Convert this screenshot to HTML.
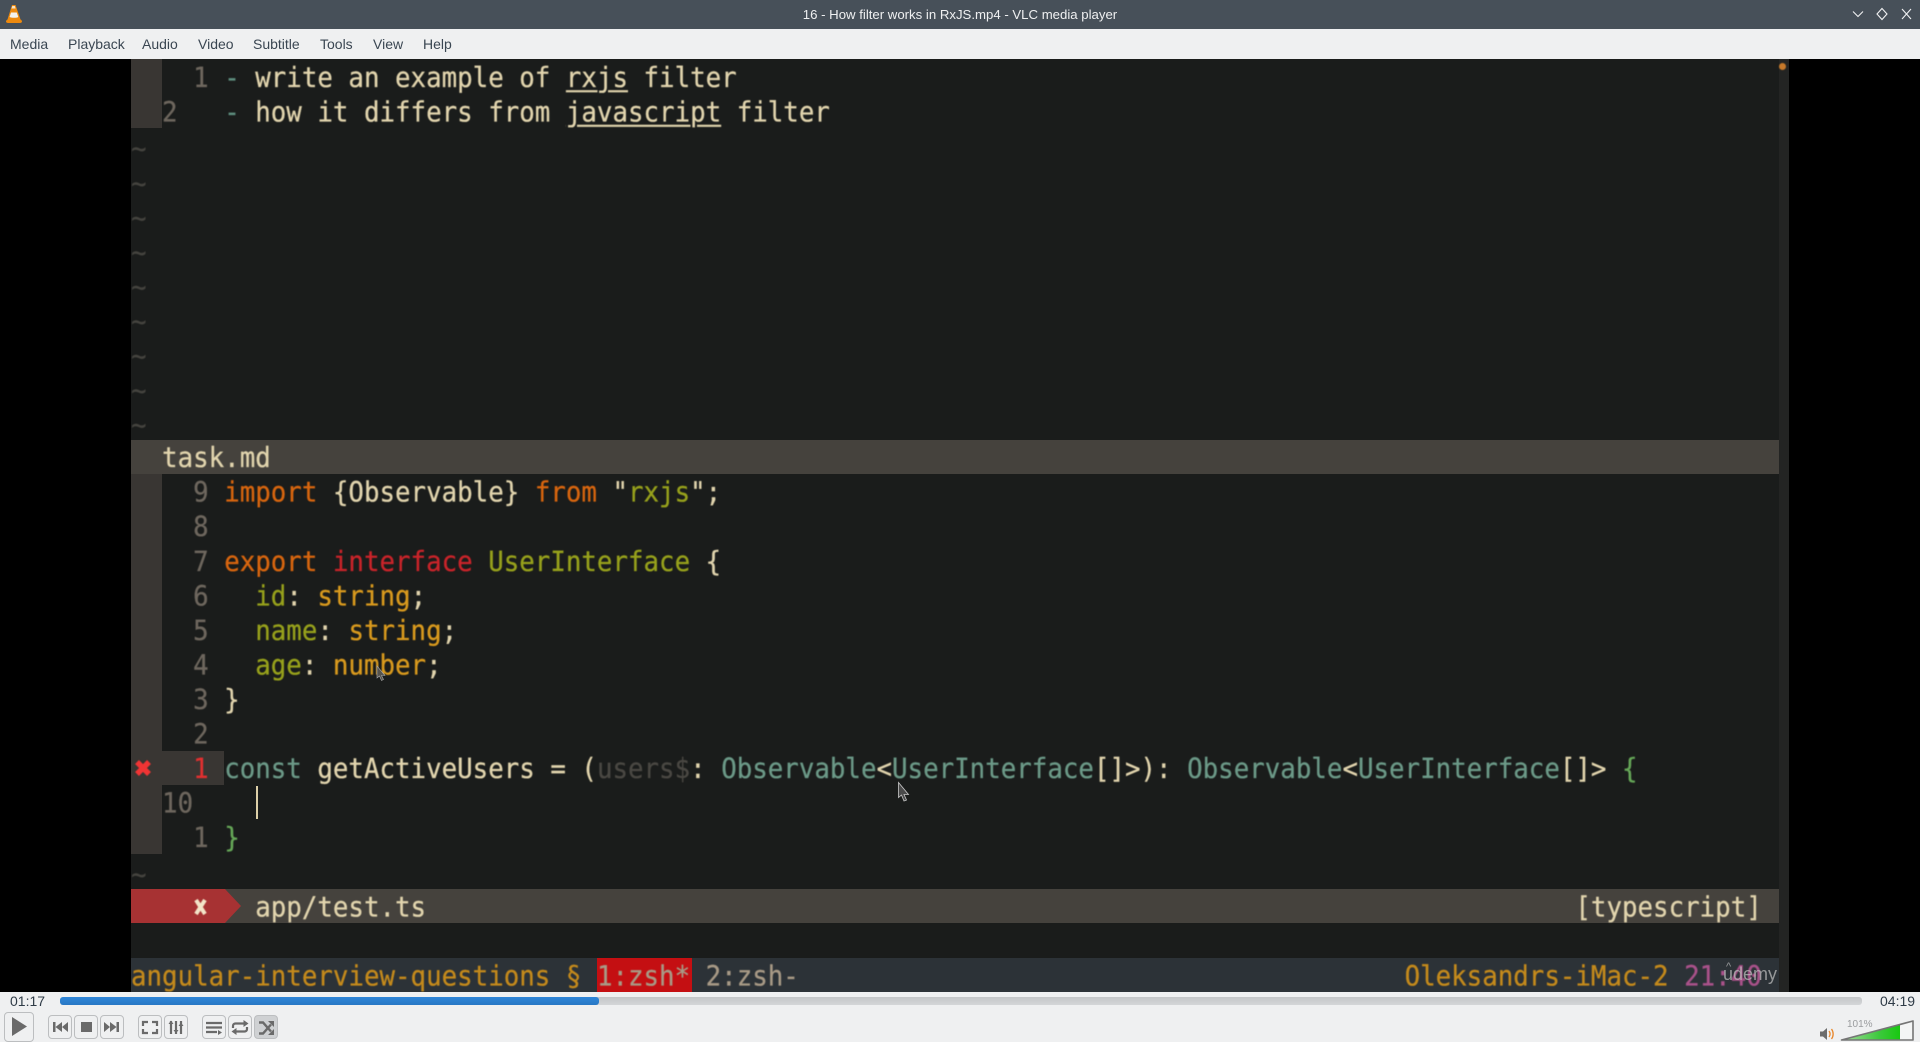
<!DOCTYPE html>
<html><head><meta charset="utf-8"><title>16 - How filter works in RxJS.mp4 - VLC media player</title>
<style>
html,body{margin:0;padding:0;width:1920px;height:1042px;overflow:hidden;background:#eff0f1}
body{position:relative;font-family:"Liberation Sans","Noto Sans CJK JP",sans-serif}
.a{position:absolute}
.tb{left:0;top:0;width:1920px;height:29px;background:#475059}
.title{left:560px;width:800px;top:5px;text-align:center;color:#eff0f1;font-size:13.2px;line-height:19px}
.menu{left:0;top:29px;width:1920px;height:30px;background:#eff0f1}
.m{top:35px;font-size:14px;line-height:19px;color:#3a4652}
.video{left:0;top:59px;width:1920px;height:933px;background:#000}
.term{left:131px;top:59px;width:1658px;height:933px;background:#1a1c1b}
.strip{left:1779px;top:59px;width:10px;height:933px;background:#232423}
.g{background:#393633}
pre{position:absolute;left:131px;top:60.7px;margin:0;font-family:"DejaVu Sans Mono","Liberation Mono",monospace;font-size:25.8px;line-height:32.02px;color:#e2d5ae;text-rendering:geometricPrecision;filter:blur(.45px);white-space:pre;transform:scaleY(1.08);transform-origin:0 0;-webkit-text-stroke:.25px currentColor}
.n{color:#6e675e}.t{color:#45443f;position:relative;top:2px}.d{color:#5f8f80}.o{color:#d8660f}.r{color:#c9242a}.gr{color:#97a11c}.y{color:#d99a1e}.c{color:#6c9a88}.dk{color:#4a4843}.ln{color:#66a758}.am{color:#c48a1c}.pk{color:#a9528a}.z{color:#a89a86}.rd{color:#e03030}.u{text-decoration:underline;text-decoration-thickness:2px;text-underline-offset:3px}
.time{font-size:14px;line-height:18px;color:#2f3b47}
.btn{box-sizing:border-box;border:1px solid #bcbec0;border-radius:4px;width:24px;height:24px;top:1015px;background:#eff0f1}
</style></head><body>
<div class="a tb"></div>
<svg class="a" style="left:5px;top:4px" width="18" height="20" viewBox="0 0 18 20"><path d="M7 1h3.500l5 14.500c.8.6 1.500 1 1.500 2 0 1-1 1.500-2 1.500H3c-1 0-2-.5-2-1.500 0-1 .7-1.400 1.500-2z" fill="#ee8a0e"/><path d="M6 8.500h5.800l1.500 4.500c-1.500 1-6.500 1-8.700 0z" fill="#f4f2ee"/><path d="M7.300 2h2.500l.8 2.500H6.500z" fill="#f6e4c8"/></svg>
<div class="a title">16 - How filter works in RxJS.mp4 - VLC media player</div>
<svg class="a" style="left:1850px;top:6px" width="66" height="16" fill="none" stroke="#f0f1f2" stroke-width="1.100"><path d="M3 5.500l5 5 5-5"/><path d="M32 2.500l5 5.500-5 5.500-5-5.500z"/><path d="M52 3l9 10M61 3l-9 10"/></svg>
<div class="a menu"></div>
<div class="a m" style="left:10px">Media</div>
<div class="a m" style="left:68px">Playback</div>
<div class="a m" style="left:142px">Audio</div>
<div class="a m" style="left:198px">Video</div>
<div class="a m" style="left:253px">Subtitle</div>
<div class="a m" style="left:320px">Tools</div>
<div class="a m" style="left:373px">View</div>
<div class="a m" style="left:423px">Help</div>

<div class="a video"></div>
<div class="a term"></div>
<div class="a strip"></div>
<div class="a" style="left:1778.500px;top:62.500px;width:7px;height:7px;border-radius:50%;background:#c6792a;filter:blur(.6px)"></div>
<div class="a g" style="left:131px;top:59px;width:31px;height:69px"></div>
<div class="a g" style="left:131px;top:474px;width:31px;height:380px"></div>
<div class="a g" style="left:131px;top:751px;width:93px;height:34px"></div>
<div class="a" style="left:131px;top:440px;width:1648px;height:34px;background:#45423d"></div>
<div class="a" style="left:131px;top:889px;width:1648px;height:34px;background:#45423d"></div>
<div class="a" style="left:131px;top:889px;width:94px;height:34px;background:#a73233"></div>
<div class="a" style="left:225px;top:889px;width:0;height:0;border-left:16px solid #a73233;border-top:17px solid transparent;border-bottom:17px solid transparent"></div>
<div class="a" style="left:131px;top:958px;width:1648px;height:34px;background:#2c3237"></div>
<div class="a" style="left:597px;top:958px;width:95px;height:34px;background:#c40f12"></div>

<pre><span class="n">    1</span> <span class="d">-</span> write an example of <span class="u">rxjs</span> filter
<span class="n">  2</span>   <span class="d">-</span> how it differs from <span class="u">javascript</span> filter
<span class="t">~</span>
<span class="t">~</span>
<span class="t">~</span>
<span class="t">~</span>
<span class="t">~</span>
<span class="t">~</span>
<span class="t">~</span>
<span class="t">~</span>
<span class="t">~</span>
  task.md
<span class="n">    9</span> <span class="o">import</span> {Observable} <span class="o">from</span> "<span class="gr">rxjs</span>";
<span class="n">    8</span>
<span class="n">    7</span> <span class="o">export</span> <span class="r">interface</span> <span class="gr">UserInterface</span> {
<span class="n">    6</span>   <span class="gr">id</span>: <span class="y">string</span>;
<span class="n">    5</span>   <span class="gr">name</span>: <span class="y">string</span>;
<span class="n">    4</span>   <span class="gr">age</span>: <span class="y">number</span>;
<span class="n">    3</span> }
<span class="n">    2</span>
<span class="rd">    1</span> <span class="c">const</span> getActiveUsers = (<span class="dk">users$</span>: <span class="c">Observable</span>&lt;<span class="c">UserInterface</span>[]&gt;): <span class="c">Observable</span>&lt;<span class="c">UserInterface</span>[]&gt; <span class="ln">{</span>
<span class="n">  10</span>
<span class="n">    1</span> <span class="ln">}</span>
<span class="t">~</span>
        app/test.ts                                                                          [typescript]

<span class="am">angular-interview-questions § </span><span class="z">1:zsh*</span> <span class="z">2:zsh-</span>                                       <span class="am">Oleksandrs-iMac-2</span> <span class="pk">21:40</span></pre>

<svg class="a" style="left:131px;top:755px;filter:blur(.4px)" width="24" height="26"><path d="M6 7l12 12M18 7L6 19" stroke="#f03434" stroke-width="5.500"/></svg>
<svg class="a" style="left:191px;top:896px;filter:blur(.4px)" width="20" height="22"><path d="M5 4l9 14M14 4L5 18" stroke="#f2e4c8" stroke-width="4"/></svg>
<div class="a" style="left:256px;top:786px;width:2px;height:33px;background:#dccfa8"></div>
<svg class="a" style="left:897px;top:781px" width="16" height="22"><path d="M1.500 1.500v15l3-2.500 2.500 6 2.500-1-2.500-5.500h4.500z" fill="#4a4a4a" stroke="#c8c8c8" stroke-width=".8"/></svg>
<svg class="a" style="left:376px;top:665px" width="12" height="18"><path d="M1 1v12l2.500-2 2 4.500 2-1-2-4h3.500z" fill="#55534e" stroke="#aaa" stroke-width=".6"/></svg>
<div class="a" style="left:1723px;top:960px;font-size:18px;line-height:22px;color:rgba(190,190,190,.72);filter:blur(.3px)"><span style="position:absolute;left:3px;top:-4px;font-size:11px">^</span><span style="position:absolute;top:3px">udemy</span></div>

<div class="a" style="left:0;top:992px;width:1920px;height:50px;background:#eff0f1"></div>
<div class="a time" style="left:10px;top:992px">01:17</div>
<div class="a" style="left:60px;top:997px;width:1802px;height:8px;border-radius:3px;background:linear-gradient(#c4c6c8,#d4d6d8)"></div>
<div class="a" style="left:60px;top:997px;width:539px;height:8px;border-radius:3px;background:linear-gradient(#2f86d8,#2877c4)"></div>
<div class="a time" style="left:1880px;top:992px">04:19</div>

<div class="a btn" style="left:4px;top:1012px;width:30px;height:30px;background:#eff0f1"></div>
<div class="a btn" style="left:48px"></div>
<div class="a btn" style="left:74px"></div>
<div class="a btn" style="left:100px"></div>
<div class="a btn" style="left:138px"></div>
<div class="a btn" style="left:164px"></div>
<div class="a btn" style="left:202px"></div>
<div class="a btn" style="left:228px"></div>
<div class="a btn" style="left:254px;background:#cfd1d3"></div>

<svg class="a" style="left:0;top:1010px" width="290" height="32" viewBox="0 0 290 32">
<g fill="#6a6a6a">
<path d="M12 7l15 9.500-15 9.500z"/>
<path d="M53 12h2.500v10H53zM62 12v10l-6.500-5zM68 12v10l-6-5z"/>
<rect x="81" y="12" width="11" height="10"/>
<path d="M119 12h-2.500v10h2.500zM110 12v10l6.500-5zM104 12v10l6-5z"/>
</g>
<g fill="none" stroke="#6a6a6a" stroke-width="2.200">
<path d="M143 16v-4h5M157 16v-4h-5M143 19v4h5M157 19v4h-5"/>
<path d="M171 11v13M176 11v13M181 11v13"/>
<path d="M206 13h16M206 17.500h16M206 22h11"/>
<path d="M233 18v-2c0-1.500 1-2.500 2.500-2.500h11M247 17v2c0 1.500-1 2.500-2.500 2.500h-11"/>
</g>
<g fill="#6a6a6a">
<path d="M168.500 14h5l-2.500-3.500zM173.500 20h5l-2.500 3.500zM178.500 16h5l-2.500-3.500z"/>
<path d="M218 20v5l4-2.500z"/>
<path d="M243.500 10v7l5-3.500zM236.500 18v7l-5-3.500z"/>
<path d="M268 11h6v6zM268 25h6v-6z"/>
</g>
<g fill="none" stroke="#6a6a6a" stroke-width="2.400"><path d="M259 12.500h4l8 9"/><path d="M259 23.500h4l8-9"/></g>
</svg>

<svg class="a" style="left:1819px;top:1026px" width="17" height="16" fill="none"><path d="M1 5.500h3l4-3.500v12l-4-3.500H1z" fill="#6c6c6c"/><path d="M10 5c1.300 1.800 1.300 4.200 0 6" stroke="#e8862a" stroke-width="1.300"/><path d="M12.500 3c2.200 3 2.200 7 0 10" stroke="#e8862a" stroke-width="1.300"/></svg>
<svg class="a" style="left:1840px;top:1018px" width="75" height="24" viewBox="0 0 75 24">
<defs><linearGradient id="gv" x1="0" x2="1"><stop offset="0" stop-color="#a8dca0"/><stop offset=".65" stop-color="#3cc83c"/><stop offset="1" stop-color="#18c810"/></linearGradient></defs>
<path d="M1.500 22L73 3v19z" fill="#f4f5f5"/>
<path d="M1.500 22L60 6.500V22z" fill="url(#gv)"/>
<path d="M1.500 22L73 3v19z" fill="none" stroke="#757575" stroke-width="1.600" stroke-linejoin="round"/>
</svg>
<div class="a" style="left:1847px;top:1019px;font-size:10px;line-height:12px;color:#9a9c9e">101%</div>
</body></html>
